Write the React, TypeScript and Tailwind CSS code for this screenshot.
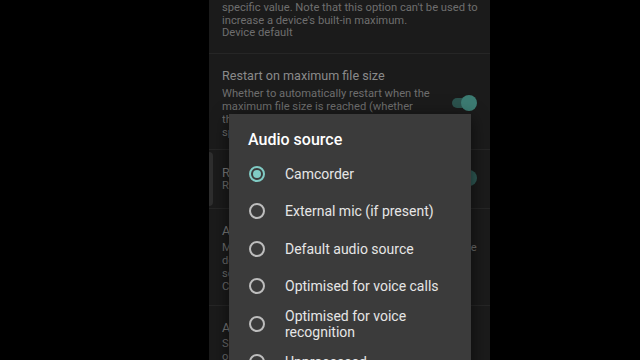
import React from "react";

const font = { fontFamily: "Roboto, 'Noto Sans', sans-serif" };

function Radio({ checked }: { checked?: boolean }) {
  return checked ? (
    <div className="w-[16px] h-[16px] rounded-full border-[2px] border-[#80cbc4] flex items-center justify-center">
      <div className="w-[8px] h-[8px] rounded-full bg-[#80cbc4]" />
    </div>
  ) : (
    <div className="w-[16px] h-[16px] rounded-full border-[2px] border-[#bdbdbd]" />
  );
}

function Toggle({ faded }: { faded?: boolean }) {
  return (
    <div className={`relative w-[22px] h-[10px] rounded-full ${faded ? "bg-[#24403d]" : "bg-[#2b524d]"}`}>
      <div className={`absolute -right-[3px] -top-[3px] w-[16px] h-[16px] rounded-full ${faded ? "bg-[#2f5a55]" : "bg-[#3c7b72]"}`} />
    </div>
  );
}

export default function App() {
  const options = [
    { label: "Camcorder", checked: true },
    { label: "External mic (if present)" },
    { label: "Default audio source" },
    { label: "Optimised for voice calls" },
    { label: "Optimised for voice recognition", two: true },
    { label: "Unprocessed" },
  ];
  return (
    <div className="w-[640px] h-[360px] bg-black relative overflow-hidden" style={font}>
      <div className="ml-[209px] w-[281px] h-[360px] bg-[#1b1b1b] relative overflow-hidden">
        {/* item 1 (cut) */}
        <div className="pl-[13px] pr-[10px] pt-[2px] pb-[13px] text-[11.2px] leading-[12.5px] text-[#6e6e6e] whitespace-nowrap">
          <div>specific value. Note that this option can't be used to</div>
          <div>increase a device's built-in maximum.</div>
          <div>Device default</div>
        </div>
        <div className="h-px bg-[#262626]" />
        {/* item 2 */}
        <div className="flex items-center pl-[13px] pr-[16px] pt-[14px] pb-[10px]">
          <div className="flex-1 whitespace-nowrap overflow-hidden">
            <div className="text-[12.6px] leading-[16px] text-[#8a8a8a] mb-[3px]">Restart on maximum file size</div>
            <div className="text-[11.2px] leading-[13px] text-[#6e6e6e]">
              <div>Whether to automatically restart when the</div>
              <div>maximum file size is reached (whether</div>
              <div>the device's built-in maximum or the</div>
              <div>specified value).</div>
            </div>
          </div>
          <Toggle />
        </div>
        <div className="h-px bg-[#262626]" />
        {/* item 3 */}
        <div className="relative flex items-center pl-[13px] pr-[16px] h-[58px]">
          <div className="absolute left-0 top-[2px] w-[4px] h-[54px] rounded-r bg-[#2e2e2e]" />
          <div className="flex-1 text-[12.6px] leading-[13px] text-[#7a7a7a]">
            <div>Restart when storage full</div>
            <div className="text-[11.2px] text-[#6e6e6e]">Restart recording</div>
          </div>
          <div className="mt-[-2px]">
            <Toggle faded />
          </div>
        </div>
        <div className="h-px bg-[#262626]" />
        {/* item 4 */}
        <div className="pl-[13px] pr-[10px] pt-[14px] pb-[12px] whitespace-nowrap overflow-hidden">
          <div className="text-[12.6px] leading-[15px] text-[#7a7a7a] mb-[3px]">Audio source</div>
          <div className="text-[11.2px] leading-[13px] text-[#6e6e6e]">
            <div>Microphone source, may not be supported by some</div>
            <div>devices e.g. external mic is only available on</div>
            <div>some devices</div>
            <div>Camcorder</div>
          </div>
        </div>
        <div className="h-px bg-[#262626]" />
        {/* item 5 */}
        <div className="pl-[13px] pr-[10px] pt-[14px] whitespace-nowrap overflow-hidden">
          <div className="text-[12.6px] leading-[15px] text-[#7a7a7a] mb-[2px]">Audio channels</div>
          <div className="text-[11.2px] leading-[13px] text-[#6e6e6e]">
            <div>Specify mono or stereo audio recording</div>
            <div>options</div>
          </div>
        </div>

        {/* Dialog */}
        <div className="absolute left-[20px] top-[114px] w-[242px] h-[260px] bg-[#3b3b3b] shadow-[0_4px_16px_rgba(0,0,0,0.6)]">
          <div className="pl-[19px] pt-[16px] pb-[5px] text-[16px] leading-[20px] font-medium text-white">Audio source</div>
          <div className="flex flex-col">
            {options.map((o) => (
              <div key={o.label} className={`flex items-center pl-[20px] ${o.two ? "h-[38px]" : "h-[37.5px]"}`}>
                <div className="w-[36px] flex-none">
                  <Radio checked={o.checked} />
                </div>
                <div className={`text-[14px] leading-[16px] text-[#e6e6e6] ${o.two ? "w-[140px]" : ""}`}>{o.label}</div>
              </div>
            ))}
          </div>
        </div>
      </div>
    </div>
  );
}
